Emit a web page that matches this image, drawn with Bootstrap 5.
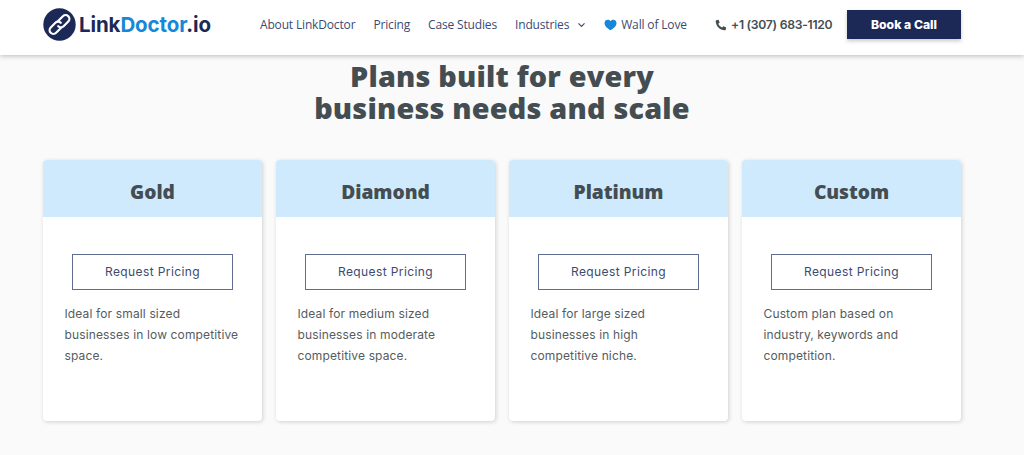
<!DOCTYPE html>
<html lang="en">
<head>
  <meta charset="UTF-8" />
  <meta name="viewport" content="width=device-width, initial-scale=1.0"/>
  <title>LinkDoctor.io - Pricing Plans</title>
  <link href="https://cdn.jsdelivr.net/npm/bootstrap@5.3.3/dist/css/bootstrap.min.css" rel="stylesheet">
  <style>
    body {
      background: #fafafa;
      color: #444e52;
      font-family: "Inter", sans-serif;
    }
    .page-wrap {
      width: 918px;
      margin-left: 43px;
    }
    main.page-wrap {
      padding-bottom: 30px;
    }
    .site-header {
      height: 55px;
      background: #fff;
      box-shadow: 0 1px 5px rgba(0, 0, 0, .26);
      position: relative;
      z-index: 2;
    }
    .site-header .page-wrap {
      height: 49px;
    }
    .brand-name {
      font: 700 20.5px/24px "Inter", sans-serif;
      color: #1c2957;
      letter-spacing: -.1px;
      margin-left: 3px;
      width: 133px;
    }
    .brand-name span {
      color: #1588d8;
    }
    .main-nav {
      margin-left: 48px;
      gap: 18px;
      width: 455px;
    }
    .main-nav .nav-link {
      padding: 0;
      font: 400 12px/20px "Open Sans", sans-serif;
      letter-spacing: -.16px;
      color: #3b4a73;
    }
    .phone-link {
      font-size: 12.2px;
      font-weight: 600;
      letter-spacing: -.28px;
      line-height: 20px;
      color: #444e52;
      width: 132px;
    }
    .btn-call {
      width: 114px;
      height: 29px;
      padding: 0;
      border: 0;
      border-radius: 0;
      background: #1c2957;
      color: #fff;
      font-size: 12.2px;
      font-weight: 800;
      line-height: 29px;
      box-shadow: 0 2px 4px rgba(0, 0, 0, .22);
    }
    .plans-title {
      font: 800 28.8px/32px "Open Sans", sans-serif;
      letter-spacing: .2px;
      padding-top: 5px;
      margin-bottom: 36px;
    }
    .plan-grid {
      gap: 14px;
    }
    .plan-card {
      flex: 1 1 0;
      height: 261px;
      border: 0;
      border-radius: 4px;
      box-shadow: 1px 1px 4px rgba(0, 0, 0, .17);
      color: inherit;
    }
    .plan-card .card-header {
      height: 57px;
      padding: 7px 0 0;
      border: 0;
      border-radius: 4px 4px 0 0;
      background: #cfe9fd;
    }
    .plan-card h2 {
      margin: 0;
      font: 800 19.2px/50px "Open Sans", sans-serif;
      letter-spacing: -.05px;
    }
    .plan-card .card-body {
      padding: 37px 21.5px 0;
    }
    .btn-plan {
      display: block;
      width: 161px;
      height: 36px;
      margin: 0 auto 14px 7.5px;
      padding: 0;
      border: 1px solid #606c90;
      border-radius: 0;
      color: #3b4a73;
      font-size: 12px;
      letter-spacing: .4px;
      line-height: 34px;
    }
    .plan-text {
      font-size: 12px;
      letter-spacing: .14px;
      line-height: 20.8px;
      white-space: nowrap;
      color: #555c60;
    }
  </style>
</head>
<body>

  <!-- Header -->
  <header class="site-header">
    <div class="page-wrap d-flex align-items-center">
      <a class="d-flex align-items-center text-decoration-none" href="#">
        <svg width="33" height="33" viewBox="0 0 33 33" fill="none">
          <circle cx="16.5" cy="16.5" r="16.2" fill="#1c2957"/>
          <g transform="rotate(-45 16.5 16.5)" stroke="#fff" stroke-width="2.2" stroke-linecap="round">
            <path d="M15 20H8.2a3.8 3.8 0 0 1 0-7.6h6.6a3.8 3.8 0 0 1 3.8 3.8"/>
            <path d="M18 13h6.8a3.8 3.8 0 0 1 0 7.6h-6.6a3.8 3.8 0 0 1-3.8-3.8"/>
          </g>
        </svg>
        <div class="brand-name text-nowrap">Link<span>Doctor</span>.io</div>
      </a>

      <nav class="nav main-nav flex-nowrap text-nowrap">
        <a class="nav-link" href="#">About LinkDoctor</a>
        <a class="nav-link" href="#">Pricing</a>
        <a class="nav-link" href="#">Case Studies</a>
        <a class="nav-link d-flex align-items-center" href="#">Industries
          <svg class="ms-2" width="9" height="6" viewBox="0 0 9 6" fill="none" stroke="#3b4a73" stroke-width="1.2"><path d="M1.5 1.3l3 3 3-3"/></svg>
        </a>
        <a class="nav-link d-flex align-items-center" href="#">
          <svg class="me-1" width="13" height="12" viewBox="0 0 13 12" fill="#1588d8"><path d="M6.5 11.3C4.3 9.9.5 7.4.5 4 .5 .7 4.6-.4 6.5 2.2 8.4-.4 12.5.7 12.5 4c0 3.4-3.8 5.9-6 7.3z"/></svg>Wall of Love
        </a>
      </nav>

      <a class="phone-link d-flex align-items-center text-nowrap text-decoration-none" href="#">
        <svg class="me-1" width="12" height="12" viewBox="0 0 12 12" fill="#444e52"><path d="M1.3 1.2L3.5.7l1.2 2.9-1.4 1.2c.8 1.7 2 2.9 3.8 3.8l1.2-1.4 2.9 1.2-.5 2.3c-.1.4-.4.6-.8.6C4.9 11.3.7 7 .7 2c0-.4.2-.7.6-.8z"/></svg>
        <span>+1 (307) 683-1120</span>
      </a>
      <a class="btn btn-call" href="#">Book a Call</a>
    </div>
  </header>

  <!-- Plans -->
  <main class="page-wrap">
    <h1 class="plans-title text-center">Plans built for every<br>business needs and scale</h1>
    <div class="plan-grid d-flex" id="planGrid"></div>
  </main>

  <script src="https://cdn.jsdelivr.net/npm/bootstrap@5.3.3/dist/js/bootstrap.bundle.min.js"></script>
  <script>
    const plans = [
      { name: 'Gold', lines: ['Ideal for small sized', 'businesses in low competitive', 'space.'] },
      { name: 'Diamond', lines: ['Ideal for medium sized', 'businesses in moderate', 'competitive space.'] },
      { name: 'Platinum', lines: ['Ideal for large sized', 'businesses in high', 'competitive niche.'] },
      { name: 'Custom', lines: ['Custom plan based on', 'industry, keywords and', 'competition.'] }
    ];

    document.getElementById('planGrid').innerHTML = plans.map(plan => `
      <div class="card plan-card">
        <div class="card-header text-center"><h2>${plan.name}</h2></div>
        <div class="card-body">
          <a class="btn btn-plan" href="#">Request Pricing</a>
          <p class="plan-text mb-0">${plan.lines.join('<br>')}</p>
        </div>
      </div>
    `).join('');
  </script>

</body>
</html>
